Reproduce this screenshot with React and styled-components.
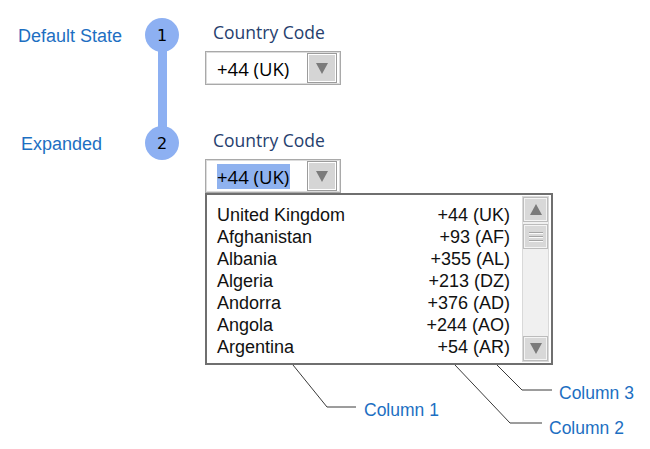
import React from 'react';
import styled, { createGlobalStyle } from 'styled-components';

const GlobalStyle = createGlobalStyle`
  body {
    margin: 0;
    background: #ffffff;
    font-family: "Liberation Sans", Arial, sans-serif;
  }
`;

const Page = styled.div`
  padding: 18px 0 0 18px;
  width: 650px;
  height: 449px;
  box-sizing: border-box;
  overflow: hidden;
`;

const Grid = styled.div`
  display: grid;
  grid-template-columns: 127px 34px 1fr;
  grid-template-rows: 108px auto;
`;

const StateLabel = styled.div`
  font-family: "Liberation Sans", Arial, sans-serif;
  font-size: 18px;
  line-height: 34px;
  padding-top: 1px;
  color: #1d6fc2;
  padding-left: ${props => props.indent || 0}px;
`;

const Step = styled.div`
  display: flex;
  flex-direction: column;
  align-items: center;
`;

const Circle = styled.div`
  width: 34px;
  height: 34px;
  border-radius: 50%;
  background: #8db0f2;
  display: flex;
  align-items: center;
  justify-content: center;
  font-family: "DejaVu Sans", sans-serif;
  font-size: 16px;
  color: #000;
  flex-shrink: 0;
`;

const Connector = styled.div`
  width: 9px;
  flex: 1;
  background: #8db0f2;
  margin-top: -2px;
  margin-bottom: -2px;
`;

const Content = styled.div`
  padding-left: 26px;
`;

const FieldLabel = styled.div`
  font-family: "Open Sans", sans-serif;
  font-size: 17.5px;
  line-height: 24px;
  color: #26406e;
  margin: 2px 0 7px 8px;
`;

const Select = styled.div`
  width: 136px;
  height: 34px;
  box-sizing: border-box;
  border: 1px solid #a9a9a9;
  box-shadow: inset 0 0 0 1px #dcdcdc;
  display: flex;
  align-items: center;
  padding: 0 3px 0 11px;
  background: #fff;
`;

const Value = styled.span`
  flex: 1;
  font-family: "Open Sans", sans-serif;
  font-size: 18.5px;
  line-height: 25px;
  color: #000;
  span {
    background: ${props => (props.selected ? '#8fb2ef' : 'transparent')};
    padding: 0 1px 0 0;
  }
`;

const ArrowButton = styled.div`
  width: 30px;
  height: 30px;
  box-sizing: border-box;
  background: #d5d5d5;
  border: 1px solid #9c9c9c;
  box-shadow: inset 0 0 0 1px #fff;
  display: flex;
  align-items: center;
  justify-content: center;
`;

const Triangle = styled.div`
  width: 0;
  height: 0;
  border-left: 6px solid transparent;
  border-right: 6px solid transparent;
  ${props => (props.up ? 'border-bottom' : 'border-top')}: 11px solid #7b7b7b;
`;

const List = styled.div`
  width: 348px;
  height: 172px;
  box-sizing: border-box;
  border: 2px solid #6f6f6f;
  display: flex;
  background: #fff;
`;

const Items = styled.ul`
  flex: 1;
  list-style: none;
  margin: 0;
  padding: 9px 12px 0 10px;
`;

const Row = styled.li`
  display: flex;
  justify-content: space-between;
  font-size: 18px;
  line-height: 22px;
  color: #111;
`;

const Scrollbar = styled.div`
  width: 27px;
  margin: 1px 2px 1px 0;
  display: flex;
  flex-direction: column;
  background: #f0f0f0;
  border: 1px solid #d9d9d9;
  box-sizing: border-box;
`;

const ScrollButton = styled.div`
  height: 25px;
  box-sizing: border-box;
  background: #d8d8d8;
  border: 1px solid #bcbcbc;
  box-shadow: inset 0 0 0 1px #f4f4f4;
  display: flex;
  align-items: center;
  justify-content: center;
  margin-top: ${props => props.gap || 0}px;
`;

const Grip = styled.div`
  width: 14px;
  display: flex;
  flex-direction: column;
  gap: 3px;
  i {
    display: block;
    height: 1px;
    background: #a5a5a5;
    box-shadow: 0 1px 0 #fafafa;
  }
`;

const Track = styled.div`
  flex: 1;
`;

const Annotations = styled.div`
  position: relative;
  width: 440px;
  height: 84px;
`;

const Lines = styled.svg`
  position: absolute;
  left: 0;
  top: -3px;
  overflow: visible;
`;

const Callout = styled.span`
  position: absolute;
  font-size: 17.5px;
  line-height: 20px;
  color: #1d6fc2;
  white-space: nowrap;
`;

const countries = [
  ['United Kingdom', '+44 (UK)'],
  ['Afghanistan', '+93 (AF)'],
  ['Albania', '+355 (AL)'],
  ['Algeria', '+213 (DZ)'],
  ['Andorra', '+376 (AD)'],
  ['Angola', '+244 (AO)'],
  ['Argentina', '+54 (AR)'],
];

const callouts = [
  { label: 'Column 1', points: '88,3 122,45 151,45', x: 159, y: 35 },
  { label: 'Column 2', points: '250,3 305,61 337,61', x: 344, y: 53 },
  { label: 'Column 3', points: '292,3 317,28 347,28', x: 354, y: 18 },
];

const CountrySelect = ({ selected }) => (
  <Select>
    <Value selected={selected}>
      <span>+44 (UK)</span>
    </Value>
    <ArrowButton>
      <Triangle />
    </ArrowButton>
  </Select>
);

export default function App() {
  return (
    <Page>
      <GlobalStyle />
      <Grid>
        <StateLabel>Default State</StateLabel>
        <Step>
          <Circle>1</Circle>
          <Connector />
        </Step>
        <Content>
          <FieldLabel>Country Code</FieldLabel>
          <CountrySelect />
        </Content>

        <StateLabel indent={3}>Expanded</StateLabel>
        <Step>
          <Circle>2</Circle>
        </Step>
        <Content>
          <FieldLabel>Country Code</FieldLabel>
          <CountrySelect selected />
          <List>
            <Items>
              {countries.map(([name, code]) => (
                <Row key={name}>
                  <span>{name}</span>
                  <span>{code}</span>
                </Row>
              ))}
            </Items>
            <Scrollbar>
              <ScrollButton>
                <Triangle up />
              </ScrollButton>
              <ScrollButton gap={2}>
                <Grip>
                  <i />
                  <i />
                  <i />
                </Grip>
              </ScrollButton>
              <Track />
              <ScrollButton>
                <Triangle />
              </ScrollButton>
            </Scrollbar>
          </List>
          <Annotations>
            <Lines width="440" height="84">
              {callouts.map(c => (
                <polyline key={c.label} points={c.points} fill="none" stroke="#3a3a3a" strokeWidth="1" />
              ))}
            </Lines>
            {callouts.map(c => (
              <Callout key={c.label} style={{ left: c.x, top: c.y }}>
                {c.label}
              </Callout>
            ))}
          </Annotations>
        </Content>
      </Grid>
    </Page>
  );
}
